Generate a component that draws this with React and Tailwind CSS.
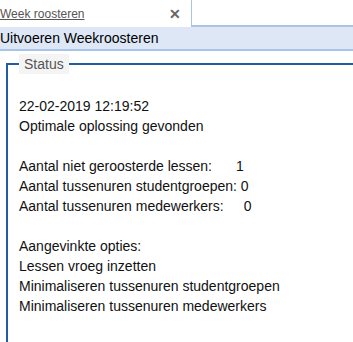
export default function App() {
  const font = { fontFamily: '"Liberation Sans", Arial, sans-serif' };
  return (
    <div className="w-[353px] h-[342px] bg-white overflow-hidden text-[#222]" style={font}>
      <div className="flex h-[27px]">
        <div className="w-[192px] h-[27px] flex items-center justify-between pl-0 pr-[10px] border-r border-[#a8c4e6] bg-white">
          <span className="text-[12px] text-[#555] underline">Week roosteren</span>
          <span className="text-[14px] font-bold text-[#666] leading-none">✕</span>
        </div>
        <div className="flex-1 border-b-2 border-[#a8c4e6]"></div>
      </div>
      <div className="h-[24px] bg-[#dde7f6] border-b-2 border-[#a8c4e6] flex items-center text-[14px] text-black">
        Uitvoeren Weekroosteren
      </div>
      <fieldset className="ml-[6px] mt-[3px] border-l-2 border-t-2 border-[#1f5f9f] pl-[11px] pt-[22px] h-[400px] min-w-0 w-[400px]">
        <legend className="ml-0 px-[5px] bg-[#f4f4f4] text-[14px] text-[#555] h-[20px] leading-[20px]">Status</legend>
        <div className="text-[14px] leading-[20px] text-[#111]">
          <div>22-02-2019 12:19:52</div>
          <div>Optimale oplossing gevonden</div>
          <div className="h-[20px]"></div>
          <div>Aantal niet geroosterde lessen:<span className="ml-[24px]">1</span></div>
          <div>Aantal tussenuren studentgroepen: 0</div>
          <div>Aantal tussenuren medewerkers:<span className="ml-[20px]">0</span></div>
          <div className="h-[20px]"></div>
          <div>Aangevinkte opties:</div>
          <div>Lessen vroeg inzetten</div>
          <div>Minimaliseren tussenuren studentgroepen</div>
          <div>Minimaliseren tussenuren medewerkers</div>
        </div>
      </fieldset>
    </div>
  );
}
